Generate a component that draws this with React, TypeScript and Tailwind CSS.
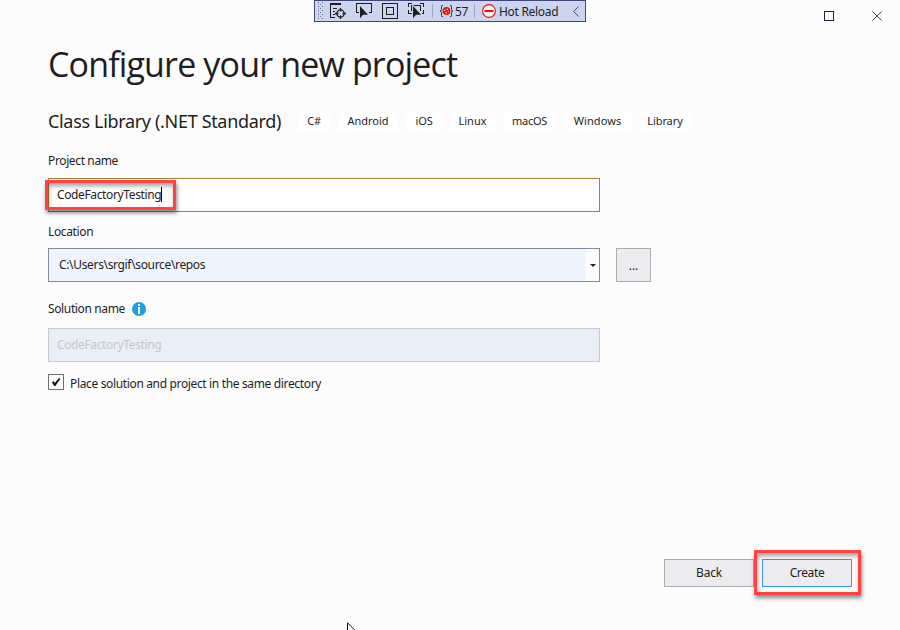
import React from "react";

const tags = [
  { name: "C#", cls: "w-8 tracking-[-0.3px]" },
  { name: "Android", cls: "w-[60px]" },
  { name: "iOS", cls: "w-9 tracking-[-0.1px]" },
  { name: "Linux", cls: "w-[45px]" },
  { name: "macOS", cls: "w-[53px] tracking-[-0.3px]" },
  { name: "Windows", cls: "w-[67px] tracking-[0.1px]" },
  { name: "Library", cls: "w-[52px] tracking-[-0.1px]" },
];

function DebugToolbar() {
  return (
    <div className="absolute left-[314px] top-0 flex h-[22px] w-[272px] items-center border border-[#40457c] bg-[#ccd5f0] text-[12px] text-[#1e1e1e]">
      <svg width="118" height="20" viewBox="315 1 118 20" fill="none" stroke="#1e1e1e" shapeRendering="crispEdges">
        <g fill="#6b7396" stroke="none">
          {[2, 6, 10, 14, 18].map((y) => (
            <React.Fragment key={y}>
              <rect x="318" y={y} width="1" height="1" />
              <rect x="322" y={y} width="1" height="1" />
            </React.Fragment>
          ))}
          {[4, 8, 12, 16].map((y) => (
            <React.Fragment key={y}>
              <rect x="320" y={y} width="1" height="1" />
              <rect x="318" y={y} width="1" height="1" opacity=".4" />
            </React.Fragment>
          ))}
        </g>
        <path d="M330 4.500h11M330 3.500h11M330.500 5v13M330 17.500h5M333 8.500h4M333 11.500h2M333 14.500h2" />
        <g shapeRendering="auto" strokeWidth="1.300">
          <circle cx="340.500" cy="13.500" r="3.600" />
          <path d="M340.500 8v3.500M340.500 15.500v3.500M335 13.500h3.500M342.500 13.500h3.500" />
        </g>
        <path d="M359 12.500h-2.500v-9h15v9h-3" />
        <path d="M360 6v12.200l3-3.400h5z" fill="#1e1e1e" stroke="none" shapeRendering="auto" />
        <rect x="382.500" y="3.500" width="15" height="15" />
        <rect x="386.500" y="7.500" width="7" height="7" />
        <path d="M412 3.500h-3.500v3M420 3.500h3.500v3M408.500 10v3.500h3M423.500 10v3.500h-2M411.500 11V5.500h9V11" />
        <path d="M413 6v12.200l3-3.400h5z" fill="#1e1e1e" stroke="#ccd5f0" strokeWidth="1.600" paintOrder="stroke" shapeRendering="auto" />
        <path d="M432.500 4v14" stroke="#9aa9cc" />
      </svg>
      <svg className="ml-[6px]" width="15" height="16" viewBox="0 0 15 16" fill="none">
        <path d="M4 2.500H3Q2.500 2.500 2.500 3.500V6.500Q2.500 8 1 8Q2.500 8 2.500 9.500V12.500Q2.500 13.500 3 13.500H4M11 2.500h1Q12.500 2.500 12.500 3.500V6.500Q12.500 8 14 8Q12.500 8 12.500 9.500V12.500Q12.500 13.500 12 13.500H11" stroke="#333" />
        <circle cx="7.500" cy="8" r="3.900" fill="#e51400" />
        <circle cx="7.500" cy="8" r="1.800" stroke="#f3dce6" strokeWidth="1.200" strokeDasharray="1.400 1.427" strokeDashoffset=".7" />
      </svg>
      <span className="w-[20px] whitespace-nowrap pl-px pt-px tracking-[-0.3px]">57</span>
      <span className="h-3.5 w-px bg-[#9aa9cc]" />
      <svg className="ml-[7px]" width="14" height="14" viewBox="0 0 14 14">
        <circle cx="7" cy="7" r="6.400" fill="#f5f1f5" stroke="#e51400" strokeWidth="1.100" />
        <path d="M2.500 7h9" stroke="#e51400" strokeWidth="2" />
      </svg>
      <span className="ml-[3px] whitespace-nowrap pt-[2px] tracking-[-0.3px]">Hot Reload</span>
      <svg className="absolute left-[258px] top-[5px]" width="6" height="11" viewBox="0 0 6 11" fill="none" stroke="#40457c">
        <path d="M5.500.5L.8 5.500l4.700 5" />
      </svg>
    </div>
  );
}

export default function App() {
  return (
    <div className="relative flex h-[630px] w-[900px] flex-col overflow-hidden bg-[#fcfcfc] pl-12 font-['Noto_Sans','Open_Sans',sans-serif] text-[12px] leading-4 tracking-[-0.37px] text-[#1e1e1e]">
      <DebugToolbar />
      <div className="flex h-[41px] justify-end pt-[11px] pr-[18px]">
        <svg width="58" height="10" viewBox="0 0 58 10" fill="none" stroke="#17233d">
          <rect x=".5" y=".5" width="9" height="9" />
          <path d="M48.500.5l9 9M57.500.5l-9 9" stroke="#3b4662" />
        </svg>
      </div>

      <h1 className="h-[68px] whitespace-nowrap font-['Open_Sans','Noto_Sans',sans-serif] text-[34px] font-normal leading-[46px] tracking-[-0.85px]">
        <span>Configure your new project</span>
      </h1>
      <div className="flex h-6 items-center">
        <h2 className="w-[250px] whitespace-nowrap text-[18px] leading-6 tracking-[-0.33px]">
          <span>Class Library (.NET Standard)</span>
        </h2>
        <div className="flex gap-2 tracking-normal">
          {tags.map((t) => (
            <span key={t.name} className={"flex h-[19px] items-center justify-center rounded-[4px] bg-white text-[11px] " + t.cls}>
              {t.name}
            </span>
          ))}
        </div>
      </div>

      <label className="mt-5 h-[25px]"><span>Project name</span></label>
      <div className="relative flex h-[34px] w-[552px] items-center border border-[#a9802f] bg-[#fdfdfd] pl-2">
        <span>CodeFactoryTesting</span>
        <span className="absolute left-[112px] top-[8px] h-[15px] w-px bg-black" />
        <div className="absolute -left-1 top-[1px] h-[30px] w-[131px] border-[3px] border-[#fd4343] shadow-[1px_3px_4px_rgba(0,0,0,0.45),inset_1px_3px_4px_rgba(0,0,0,0.35)]" />
      </div>

      <label className="mt-3 h-6"><span>Location</span></label>
      <div className="flex gap-4">
        <div className="flex h-[34px] w-[552px] items-center border border-[#7f8ba3] bg-[#f0f4fe]">
          <span className="flex-1 pl-2.5 tracking-[-0.34px]">C:\Users\srgif\source\repos</span>
          <span className="flex h-full w-[13px] items-center justify-center bg-[#fdfdfd]">
            <svg width="6" height="3" viewBox="0 0 6 3"><path d="M0 0h6L3 3z" fill="#17233d" /></svg>
          </span>
        </div>
        <button className="h-[34px] w-[35px] border border-[#acacac] bg-[#ecebf0] pt-0.5 tracking-normal">...</button>
      </div>

      <div className="mt-[19px] flex h-[27px] items-start">
        <span className="w-[84px] whitespace-nowrap">Solution name</span>
        <svg className="mt-px" width="14" height="14" viewBox="0 0 14 14">
          <circle cx="7" cy="7" r="7" fill="#1ba1e2" />
          <path d="M6 2h2v2H6zM6 5h2v7H6z" fill="#fff" />
        </svg>
      </div>
      <div className="flex h-[34px] w-[552px] items-center border border-[#c6cad4] bg-[#eaeef7] pl-2 text-[#c6c8cd]">
        <span>CodeFactoryTesting</span>
      </div>
      <div className="mt-3 flex items-start">
        <span className="flex h-4 w-4 items-center justify-center border border-[#717171] bg-[#fdfdfd]">
          <svg width="10" height="10" viewBox="0 0 10 10"><path d="M1 5.500L2.300 4l1.500 2L8 1l1.300.8L4.400 9H3.300z" fill="#111" /></svg>
        </span>
        <span className="ml-1.5 mt-0.5 whitespace-nowrap tracking-[-0.35px]">Place solution and project in the same directory</span>
      </div>

      <div className="ml-[616px] mt-[167px] flex gap-2">
        <button className="h-7 w-[90px] border border-[#acacac] bg-[#ecebf0] tracking-[-0.2px]">Back</button>
        <div className="relative">
          <button className="h-7 w-[90px] border border-[#3399ff] bg-[#ecebf0]">Create</button>
          <div className="absolute -left-2 -top-[9px] h-[45px] w-[107px] border-[3px] border-[#fd4343] shadow-[1px_3px_4px_rgba(0,0,0,0.45),inset_1px_3px_4px_rgba(0,0,0,0.35)]" />
        </div>
      </div>
      <svg className="absolute left-[347px] top-[622px]" width="9" height="8" viewBox="0 0 9 8">
        <path d="M.5 9V.8l8 8" fill="#fff" stroke="#111" />
      </svg>
    </div>
  );
}
